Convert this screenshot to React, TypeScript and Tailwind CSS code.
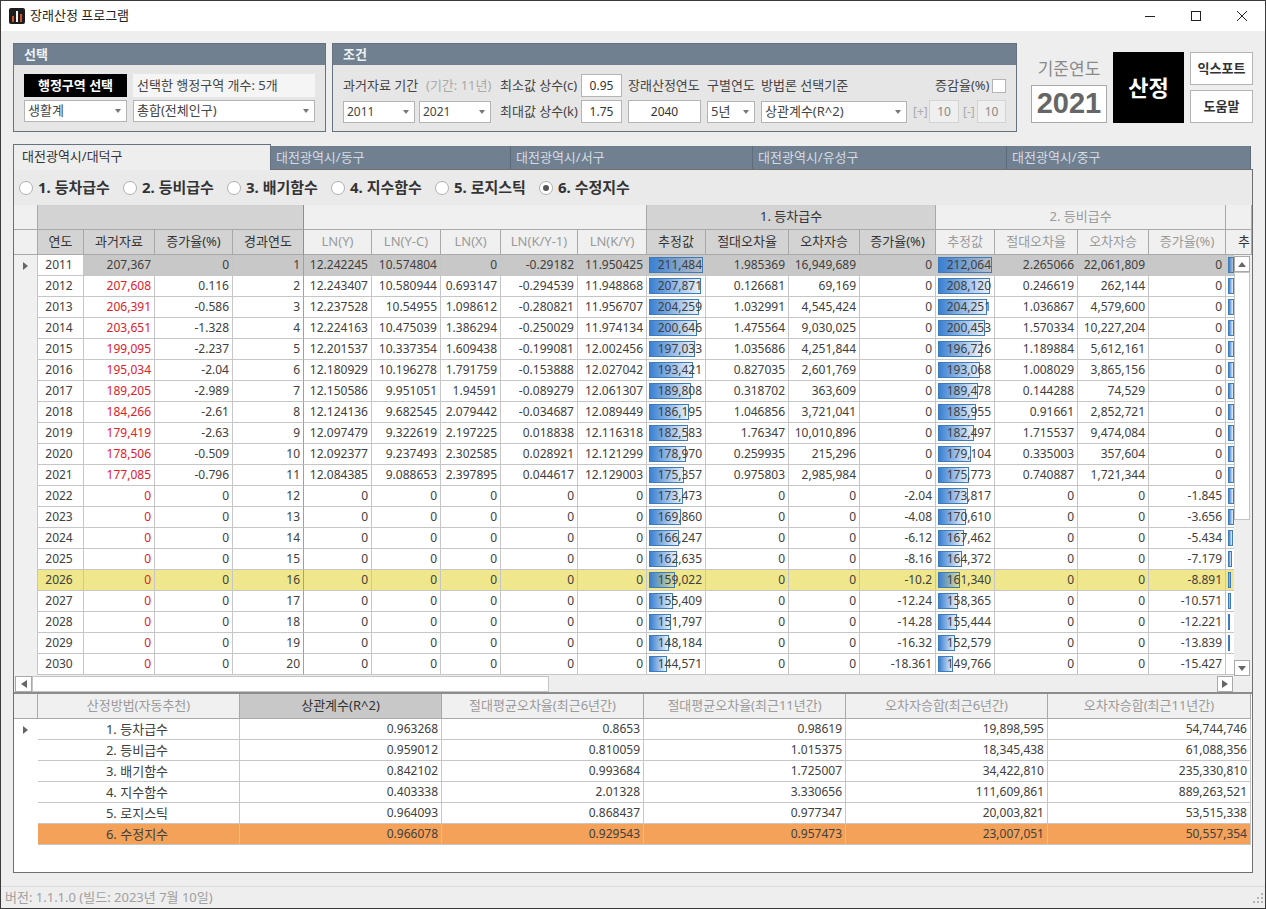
import type { ReactNode } from 'react';

type GridRow = {
  year: number;
  past: string;
  rate: string;
  lnY: string;
  lnYC: string;
  lnX: string;
  lnK1: string;
  lnKY: string;
  est1: number;
  abs1: string;
  sq1: string;
  rate1: string;
  est2: number;
  abs2: string;
  sq2: string;
  rate2: string;
  bar3: number;
};

const pastRows: [number, string, string, string, string, string, string, string, number, string, string, number, string, string][] = [
  [2011, '207,367', '0', '12.242245', '10.574804', '0', '-0.29182', '11.950425', 211484, '1.985369', '16,949,689', 212064, '2.265066', '22,061,809'],
  [2012, '207,608', '0.116', '12.243407', '10.580944', '0.693147', '-0.294539', '11.948868', 207871, '0.126681', '69,169', 208120, '0.246619', '262,144'],
  [2013, '206,391', '-0.586', '12.237528', '10.54955', '1.098612', '-0.280821', '11.956707', 204259, '1.032991', '4,545,424', 204251, '1.036867', '4,579,600'],
  [2014, '203,651', '-1.328', '12.224163', '10.475039', '1.386294', '-0.250029', '11.974134', 200646, '1.475564', '9,030,025', 200453, '1.570334', '10,227,204'],
  [2015, '199,095', '-2.237', '12.201537', '10.337354', '1.609438', '-0.199081', '12.002456', 197033, '1.035686', '4,251,844', 196726, '1.189884', '5,612,161'],
  [2016, '195,034', '-2.04', '12.180929', '10.196278', '1.791759', '-0.153888', '12.027042', 193421, '0.827035', '2,601,769', 193068, '1.008029', '3,865,156'],
  [2017, '189,205', '-2.989', '12.150586', '9.951051', '1.94591', '-0.089279', '12.061307', 189808, '0.318702', '363,609', 189478, '0.144288', '74,529'],
  [2018, '184,266', '-2.61', '12.124136', '9.682545', '2.079442', '-0.034687', '12.089449', 186195, '1.046856', '3,721,041', 185955, '0.91661', '2,852,721'],
  [2019, '179,419', '-2.63', '12.097479', '9.322619', '2.197225', '0.018838', '12.116318', 182583, '1.76347', '10,010,896', 182497, '1.715537', '9,474,084'],
  [2020, '178,506', '-0.509', '12.092377', '9.237493', '2.302585', '0.028921', '12.121299', 178970, '0.259935', '215,296', 179104, '0.335003', '357,604'],
  [2021, '177,085', '-0.796', '12.084385', '9.088653', '2.397895', '0.044617', '12.129003', 175357, '0.975803', '2,985,984', 175773, '0.740887', '1,721,344'],
];

const futureRows: [number, number, string, number, string, number][] = [
  [2022, 173473, '-2.04', 173817, '-1.845', 6],
  [2023, 169860, '-4.08', 170610, '-3.656', 6],
  [2024, 166247, '-6.12', 167462, '-5.434', 5],
  [2025, 162635, '-8.16', 164372, '-7.179', 4],
  [2026, 159022, '-10.2', 161340, '-8.891', 3],
  [2027, 155409, '-12.24', 158365, '-10.571', 3],
  [2028, 151797, '-14.28', 155444, '-12.221', 2],
  [2029, 148184, '-16.32', 152579, '-13.839', 2],
  [2030, 144571, '-18.361', 149766, '-15.427', 0],
];

const rows: GridRow[] = [
  ...pastRows.map((r) => ({
    year: r[0], past: r[1], rate: r[2], lnY: r[3], lnYC: r[4], lnX: r[5], lnK1: r[6], lnKY: r[7],
    est1: r[8], abs1: r[9], sq1: r[10], rate1: '0', est2: r[11], abs2: r[12], sq2: r[13], rate2: '0', bar3: 6,
  })),
  ...futureRows.map((r) => ({
    year: r[0], past: '0', rate: '0', lnY: '0', lnYC: '0', lnX: '0', lnK1: '0', lnKY: '0',
    est1: r[1], abs1: '0', sq1: '0', rate1: r[2], est2: r[3], abs2: '0', sq2: '0', rate2: r[4], bar3: r[5],
  })),
];

const methods = [
  ['1. 등차급수', '0.963268', '0.8653', '0.98619', '19,898,595', '54,744,746'],
  ['2. 등비급수', '0.959012', '0.810059', '1.015375', '18,345,438', '61,088,356'],
  ['3. 배기함수', '0.842102', '0.993684', '1.725007', '34,422,810', '235,330,810'],
  ['4. 지수함수', '0.403338', '2.01328', '3.330656', '111,609,861', '889,263,521'],
  ['5. 로지스틱', '0.964093', '0.868437', '0.977347', '20,003,821', '53,515,338'],
  ['6. 수정지수', '0.966078', '0.929543', '0.957473', '23,007,051', '50,557,354'],
];

const colWidths = ['w-[24px]', 'w-[46px]', 'w-[71px]', 'w-[78px]', 'w-[71px]', 'w-[68px]', 'w-[69px]', 'w-[60px]', 'w-[77px]', 'w-[69px]', 'w-[59px]', 'w-[83px]', 'w-[71px]', 'w-[76px]', 'w-[59px]', 'w-[83px]', 'w-[71px]', 'w-[77px]', 'w-[26px]'];

const fmt = (n: number) => n.toLocaleString('en-US');

function Caret({ dir }: { dir: 'up' | 'down' | 'left' | 'right' }) {
  const d = { up: 'M0 5 L4 0 L8 5 Z', down: 'M0 0 L8 0 L4 5 Z', left: 'M6 0 L6 8 L0 4 Z', right: 'M0 0 L0 8 L6 4 Z' }[dir];
  const wide = dir === 'up' || dir === 'down';
  return (
    <svg width={wide ? 8 : 6} height={wide ? 5 : 8} viewBox={wide ? '0 0 8 5' : '0 0 6 8'}>
      <path d={d} fill="#666" />
    </svg>
  );
}

function Panel({ title, className, children }: { title: string; className: string; children: ReactNode }) {
  return (
    <div className={`h-[89px] border border-[#66727f] bg-[#e6e6e6] ${className}`}>
      <div className="h-[21px] bg-[#708090] pl-[10px] text-[13px] leading-[20px] font-bold text-[#eef1f3]">{title}</div>
      {children}
    </div>
  );
}

function Combo({ text, className }: { text: string; className: string }) {
  return (
    <div className={`flex h-[22px] items-center justify-between border border-[#b4b4b4] bg-white pr-[5px] pl-[3px] text-[#444] ${className}`}>
      <span>{text}</span>
      <svg width="6" height="4" viewBox="0 0 6 4">
        <path d="M0 0 L6 0 L3 4 Z" fill="#777" />
      </svg>
    </div>
  );
}

function Field({ text, className }: { text: string; className: string }) {
  return <div className={`flex h-[23px] items-center justify-center border border-[#b4b4b4] bg-white text-[12px] text-[#333] ${className}`}>{text}</div>;
}

function Bar({ width }: { width: number }) {
  return <div className="absolute top-[2px] left-[2px] h-[16px] border border-[#3d7cb8] bg-gradient-to-r from-[#3a80d2] to-[#3a80d2]/10" style={{ width }} />;
}

function Cell({ children, className = '' }: { children?: ReactNode; className?: string }) {
  return <td className={`h-[21px] overflow-hidden border-r border-b border-[#c6c6c6] p-0 pr-[3px] text-right leading-[20px] whitespace-nowrap ${className}`}>{children}</td>;
}

function Head({ children, dark, span, className = '' }: { children?: ReactNode; dark?: boolean; span?: number; className?: string }) {
  return (
    <th colSpan={span} className={`border-r border-b border-[#a9a9a9] p-0 text-center text-[13px] font-normal whitespace-nowrap ${dark ? 'bg-[#d3d3d3] text-[#333]' : 'bg-[#f0f0f0] text-[#9a9a9a]'} ${className}`}>
      {children}
    </th>
  );
}

function DataGrid() {
  return (
    <div className="relative h-[471px] overflow-hidden bg-[#eeeeee]">
      <table className="w-[1238px] table-fixed border-separate border-spacing-0 text-[12px] text-[#404040]">
        <colgroup>
          {colWidths.map((w, i) => (
            <col key={i} className={w} />
          ))}
        </colgroup>
        <thead>
          <tr className="h-[25px]">
            <Head />
            <Head dark span={4} className="border-r-[#8f8f8f]" />
            <Head span={5} />
            <Head dark span={4}>1. 등차급수</Head>
            <Head span={4}>2. 등비급수</Head>
            <Head />
          </tr>
          <tr className="h-[25px]">
            <Head />
            <Head dark>연도</Head>
            <Head dark>과거자료</Head>
            <Head dark>증가율(%)</Head>
            <Head dark className="border-r-[#8f8f8f]">경과연도</Head>
            <Head>LN(Y)</Head>
            <Head>LN(Y-C)</Head>
            <Head>LN(X)</Head>
            <Head>LN(K/Y-1)</Head>
            <Head>LN(K/Y)</Head>
            <Head dark>추정값</Head>
            <Head dark>절대오차율</Head>
            <Head dark>오차자승</Head>
            <Head dark>증가율(%)</Head>
            <Head>추정값</Head>
            <Head>절대오차율</Head>
            <Head>오차자승</Head>
            <Head>증가율(%)</Head>
            <Head className="!text-left !text-[#333]">
              <span className="pl-[12px]">추</span>
            </Head>
          </tr>
        </thead>
        <tbody>
          {rows.map((r, i) => {
            const rowBg = i === 0 ? 'bg-[#c8c8c8]' : r.year === 2026 ? 'bg-[#f0e68c]' : 'bg-white';
            return (
              <tr key={r.year}>
                <td className="h-[21px] border-r border-[#c6c6c6] bg-[#f0f0f0] p-0 pl-[9px]">
                  {i === 0 && (
                    <span className="flex items-center">
                      <svg width="5" height="8" viewBox="0 0 5 8">
                        <path d="M0 0 L5 4 L0 8 Z" fill="#666" />
                      </svg>
                    </span>
                  )}
                </td>
                <Cell className={`pr-0 !text-center ${i === 0 ? 'bg-white' : rowBg}`}>{r.year}</Cell>
                <Cell className={`${rowBg} ${i > 0 ? 'text-[#e0202c]' : ''}`}>{r.past}</Cell>
                <Cell className={rowBg}>{r.rate}</Cell>
                <Cell className={`${rowBg} border-r-[#a0a0a0]`}>{i + 1}</Cell>
                <Cell className={rowBg}>{r.lnY}</Cell>
                <Cell className={rowBg}>{r.lnYC}</Cell>
                <Cell className={rowBg}>{r.lnX}</Cell>
                <Cell className={rowBg}>{r.lnK1}</Cell>
                <Cell className={rowBg}>{r.lnKY}</Cell>
                <Cell className={`relative ${rowBg}`}>
                  <Bar width={18 + ((r.est1 - 144571) * 36) / 66913} />
                  <span className="relative">{fmt(r.est1)}</span>
                </Cell>
                <Cell className={rowBg}>{r.abs1}</Cell>
                <Cell className={rowBg}>{r.sq1}</Cell>
                <Cell className={rowBg}>{r.rate1}</Cell>
                <Cell className={`relative ${rowBg}`}>
                  <Bar width={15 + ((r.est2 - 149766) * 39) / 62298} />
                  <span className="relative">{fmt(r.est2)}</span>
                </Cell>
                <Cell className={rowBg}>{r.abs2}</Cell>
                <Cell className={rowBg}>{r.sq2}</Cell>
                <Cell className={rowBg}>{r.rate2}</Cell>
                <Cell className={`relative border-r-0 ${rowBg}`}>{r.bar3 > 0 && <Bar width={r.bar3} />}</Cell>
              </tr>
            );
          })}
        </tbody>
      </table>

      {/* vertical scrollbar sits on top of the clipped last column */}
      <div className="absolute top-[50px] right-0 flex h-[421px] w-[18px] flex-col items-start bg-[#eeeeee] pt-px">
        <div className="flex h-[16px] w-[16px] items-center justify-center border border-[#a9a9a9] bg-white">
          <Caret dir="up" />
        </div>
        <div className="h-[248px] w-[16px] border border-[#c4c4c4] bg-white" />
        <div className="flex-1" />
        <div className="flex h-[16px] w-[16px] items-center justify-center border border-[#a9a9a9] bg-white">
          <Caret dir="down" />
        </div>
      </div>
    </div>
  );
}

function HScroll() {
  return (
    <div className="flex h-[16px] items-stretch bg-[#eeeeee] pr-[19px] pl-px">
      <div className="flex w-[17px] items-center justify-center border border-[#a9a9a9] bg-white">
        <Caret dir="left" />
      </div>
      <div className="w-[517px] border border-[#c4c4c4] bg-white" />
      <div className="flex-1" />
      <div className="flex w-[16px] items-center justify-center border border-[#a9a9a9] bg-white">
        <Caret dir="right" />
      </div>
    </div>
  );
}

function MethodGrid() {
  const heads = ['산정방법(자동추천)', '상관계수(R^2)', '절대평균오차율(최근6년간)', '절대평균오차율(최근11년간)', '오차자승합(최근6년간)', '오차자승합(최근11년간)'];
  return (
    <table className="w-[1237px] table-fixed border-separate border-spacing-0 text-[12px] text-[#404040]">
      <colgroup>
        <col className="w-[24px]" />
        <col className="w-[202px]" />
        <col className="w-[202px]" />
        <col className="w-[202px]" />
        <col className="w-[202px]" />
        <col className="w-[202px]" />
        <col className="w-[203px]" />
      </colgroup>
      <thead>
        <tr className="h-[25px]">
          <Head />
          {heads.map((h, i) => (
            <Head key={h} dark={i === 1} className={i === 1 ? '!bg-[#c8c8c8]' : ''}>
              {h}
            </Head>
          ))}
        </tr>
      </thead>
      <tbody>
        {methods.map((m, i) => {
          const bg = i === 5 ? 'bg-[#f4a15a]' : 'bg-white';
          return (
            <tr key={m[0]}>
              <td className="h-[21px] bg-white p-0 pl-[9px]">
                {i === 0 && (
                  <span className="flex items-center">
                    <svg width="5" height="8" viewBox="0 0 5 8">
                      <path d="M0 0 L5 4 L0 8 Z" fill="#666" />
                    </svg>
                  </span>
                )}
              </td>
              <Cell className={`pr-0 !text-center text-[13px] ${bg}`}>{m[0]}</Cell>
              {m.slice(1).map((v, k) => (
                <Cell key={k} className={bg}>{v}</Cell>
              ))}
            </tr>
          );
        })}
      </tbody>
    </table>
  );
}

export default function App() {
  const tabs = [
    ['대전광역시/동구', 'w-[240px]'],
    ['대전광역시/서구', 'w-[242px]'],
    ['대전광역시/유성구', 'w-[254px]'],
    ['대전광역시/중구', 'w-[244px]'],
  ];
  const radios = ['1. 등차급수', '2. 등비급수', '3. 배기함수', '4. 지수함수', '5. 로지스틱', '6. 수정지수'];

  return (
    <div className="flex h-[909px] w-[1266px] flex-col overflow-hidden border border-[#3a3a3a] bg-[#eeeeee] font-['Noto_Sans','Noto_Sans_CJK_KR',sans-serif] text-[13px]">
      {/* Title bar */}
      <div className="flex h-[30px] shrink-0 items-center bg-white pl-[8px]">
        <svg width="16" height="16" viewBox="0 0 16 16">
          <rect width="16" height="16" rx="2" fill="#1c1c1c" />
          <rect x="3" y="8" width="2" height="6" fill="#d0532f" />
          <rect x="7" y="3" width="2" height="11" fill="#f2f2f2" />
          <rect x="11" y="6" width="2" height="8" fill="#d0532f" />
        </svg>
        <span className="ml-[5px] text-[#222]">장래산정 프로그램</span>
        <div className="ml-auto flex">
          <div className="flex h-[30px] w-[46px] items-center justify-center">
            <svg width="10" height="10" viewBox="0 0 10 10">
              <path d="M0 5.5 H10" stroke="#222" strokeWidth="1" />
            </svg>
          </div>
          <div className="flex h-[30px] w-[46px] items-center justify-center">
            <svg width="10" height="10" viewBox="0 0 10 10">
              <rect x="0.5" y="0.5" width="9" height="9" fill="none" stroke="#222" strokeWidth="1" />
            </svg>
          </div>
          <div className="flex h-[30px] w-[46px] items-center justify-center">
            <svg width="10" height="10" viewBox="0 0 10 10">
              <path d="M0 0 L10 10 M10 0 L0 10" stroke="#222" strokeWidth="1" />
            </svg>
          </div>
        </div>
      </div>

      <div className="flex min-h-0 flex-1 flex-col pt-[12px] pl-[12px]">
        {/* Top controls */}
        <div className="flex h-[89px] shrink-0">
          <Panel title="선택" className="w-[313px]">
            <div className="flex flex-col gap-[3px] pt-[9px] pl-[10px]">
              <div className="flex gap-[6px]">
                <div className="flex h-[23px] w-[103px] items-center justify-center bg-black font-bold text-white">행정구역 선택</div>
                <div className="flex h-[23px] w-[182px] items-center bg-[#f5f5f5] pl-[4px] text-[#444]">선택한 행정구역 개수: 5개</div>
              </div>
              <div className="flex gap-[6px]">
                <Combo text="생활계" className="w-[103px]" />
                <Combo text="총합(전체인구)" className="w-[182px]" />
              </div>
            </div>
          </Panel>

          <Panel title="조건" className="ml-[6px] w-[685px]">
            <div className="flex flex-col gap-[3px] pt-[9px] pl-[10px] text-[#444]">
              <div className="flex h-[23px] items-center whitespace-nowrap">
                <span className="w-[83px]">과거자료 기간</span>
                <span className="w-[74px] text-[#aaa]">(기간: 11년)</span>
                <span className="w-[81px]">최소값 상수(c)</span>
                <Field text="0.95" className="w-[41px]" />
                <span className="ml-[6px] w-[79px]">장래산정연도</span>
                <span className="w-[54px]">구별연도</span>
                <span className="w-[174px]">방법론 선택기준</span>
                <span className="w-[57px]">증감율(%)</span>
                <div className="h-[14px] w-[14px] border border-[#b4b4b4] bg-white" />
              </div>
              <div className="flex h-[23px] items-center whitespace-nowrap">
                <Combo text="2011" className="w-[72px] text-[12px]" />
                <Combo text="2021" className="ml-[4px] w-[72px] text-[12px]" />
                <span className="ml-[9px] w-[81px]">최대값 상수(k)</span>
                <Field text="1.75" className="w-[41px]" />
                <Field text="2040" className="ml-[6px] w-[73px]" />
                <Combo text="5년" className="ml-[6px] w-[48px]" />
                <Combo text="상관계수(R^2)" className="ml-[6px] w-[146px]" />
                <span className="ml-[6px] w-[16px] text-[12px] text-[#aaa]">[+]</span>
                <Field text="10" className="w-[30px] border-[#d4d4d4] !bg-[#efefef] !text-[#888]" />
                <span className="ml-[4px] w-[14px] text-[12px] text-[#aaa]">[-]</span>
                <Field text="10" className="w-[29px] border-[#d4d4d4] !bg-[#efefef] !text-[#888]" />
              </div>
            </div>
          </Panel>

          <div className="ml-[14px] flex w-[76px] flex-col items-center pt-[9px]">
            <div className="flex h-[33px] items-center text-[17px] text-[#8a8a8a]">기준연도</div>
            <div className="flex h-[38px] w-[76px] items-center justify-center border border-[#a8a8a8] bg-white font-['Liberation_Sans',sans-serif] text-[29px] font-bold text-[#666]">2021</div>
          </div>
          <div className="mt-[9px] ml-[6px] flex h-[71px] w-[71px] items-center justify-center bg-black text-[22px] font-bold text-white">산정</div>
          <div className="mt-[9px] ml-[6px] flex w-[63px] flex-col gap-[5px]">
            <div className="flex h-[33px] items-center justify-center border border-[#b4b4b4] bg-white font-bold text-[#333]">익스포트</div>
            <div className="flex h-[33px] items-center justify-center border border-[#b4b4b4] bg-white font-bold text-[#333]">도움말</div>
          </div>
        </div>

        {/* Tabs */}
        <div className="mt-[12px] flex h-[26px] shrink-0 items-end">
          <div className="z-10 h-[26px] w-[258px] border-t border-r border-l border-[#66727f] bg-[#eeeeee] pl-[8px] leading-[23px] text-[#333]">대전광역시/대덕구</div>
          {tabs.map(([t, w]) => (
            <div key={t} className={`h-[24px] border-r border-b border-[#5e6c7a] bg-[#708090] pl-[5px] leading-[23px] text-[#d5dbe1] ${w}`}>
              {t}
            </div>
          ))}
        </div>

        {/* Tab page */}
        <div className="mt-[-1px] flex h-[704px] w-[1240px] shrink-0 flex-col border border-[#6f6f6f] bg-[#eaeaea]">
          <div className="flex h-[35px] shrink-0 items-center pl-[5px]">
            {radios.map((r, i) => (
              <div key={r} className="flex w-[104px] items-center">
                <div className="flex h-[14px] w-[14px] items-center justify-center rounded-full border border-[#b0b0b0] bg-white">
                  {i === 5 && <div className="h-[6px] w-[6px] rounded-full bg-[#555]" />}
                </div>
                <span className="ml-[5px] text-[15px] leading-none font-bold whitespace-nowrap text-[#333]">{r}</span>
              </div>
            ))}
          </div>
          <DataGrid />
          <HScroll />
          <div className="h-[2px] shrink-0 bg-[#8c8c8c]" />
          <div className="min-h-0 flex-1 bg-white">
            <MethodGrid />
          </div>
        </div>

        {/* Status bar */}
        <div className="mt-[13px] ml-[-12px] flex h-[22px] items-center justify-between border-t border-[#dcdcdc] pr-[2px] pl-[4px] text-[#a0a0a0]">
          <span>버전: 1.1.1.0 (빌드: 2023년 7월 10일)</span>
          <svg width="11" height="11" viewBox="0 0 11 11">
            <path d="M9 1 h2 v2 h-2z M5 5 h2 v2 h-2z M9 5 h2 v2 h-2z M1 9 h2 v2 h-2z M5 9 h2 v2 h-2z M9 9 h2 v2 h-2z" fill="#b4b4b4" />
          </svg>
        </div>
      </div>
    </div>
  );
}
